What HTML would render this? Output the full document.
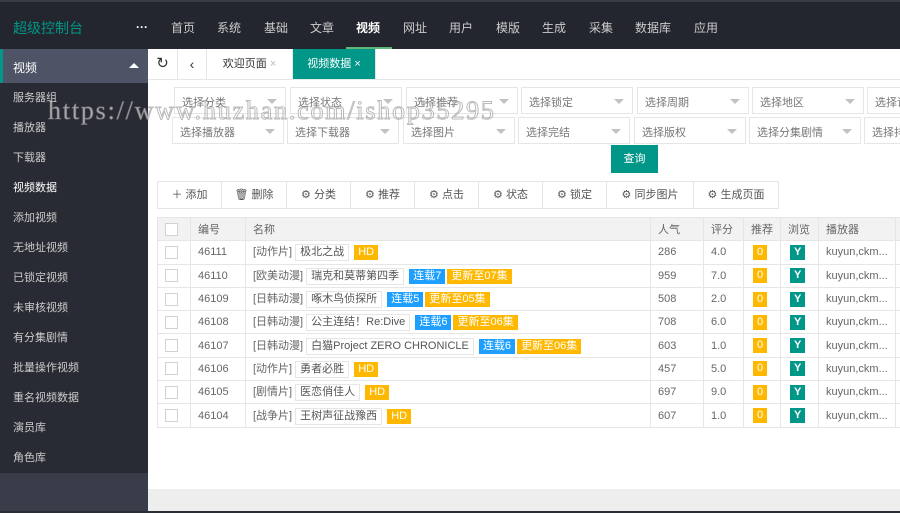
<!DOCTYPE html>
<html><head><meta charset="utf-8"><style>
*{margin:0;padding:0;box-sizing:border-box}
body{width:900px;height:513px;overflow:hidden;font-family:"Liberation Sans","Noto Sans CJK SC",sans-serif;font-size:11px;color:#333;background:#fff;position:relative}
.hdr{position:absolute;left:0;top:0;width:900px;height:49px;background:#23262e;border-top:2px solid #3a3d45}
.logo{position:absolute;left:13px;top:16px;color:#009688;font-size:14px}
.dots{position:absolute;left:136px;top:18px;color:#fff;font-size:12px;font-weight:bold}
.nav span{position:absolute;top:17px;color:#ccc;font-size:12px}
.nav .on{color:#fff;font-weight:bold}
.navline{position:absolute;left:346px;top:45px;width:46px;height:3px;background:#5fb878}
.side{position:absolute;left:0;top:49px;width:148px;height:464px;background:#282b33}
.side .act{height:34px;background:#4e5465;border-left:3px solid #009688;color:#fff;padding:10px 0 0 10px;font-size:12px;position:relative}
.side .act:after{content:"";position:absolute;right:9px;top:14px;border:5px solid transparent;border-bottom-color:#fff;border-top:0}
.side div.i{height:30px;line-height:30px;padding-left:13px;color:#ccc;font-size:11px}
.side .bot{position:absolute;left:0;top:424px;width:148px;height:38px;background:#393d49}
.tabs{position:absolute;left:148px;top:49px;width:752px;height:31px;border-bottom:1px solid #e6e6e6;background:#fff}
.tabs div{position:absolute;top:0;height:30px;line-height:30px;border-right:1px solid #e6e6e6;font-size:11px;text-align:center}
.sel{position:absolute;height:27px;border:1px solid #e6e6e6;background:#fff;color:#777;padding:6px 0 0 7px;font-size:11px}
.sel:after{content:"";position:absolute;right:8px;top:11px;border:5px solid transparent;border-top-color:#c2c2c2}
.btnq{position:absolute;left:611px;top:145px;width:47px;height:28px;background:#009688;color:#fff;text-align:center;line-height:28px;font-size:11px}
.tb{position:absolute;top:181px;height:28px;border:1px solid #e6e6e6;border-right:0;background:#fff;line-height:26px;text-align:center;color:#555}
.wm{position:absolute;left:48px;top:96px;font-family:"Liberation Serif",serif;font-size:26px;color:rgba(255,255,255,.6);-webkit-text-stroke:1px rgba(120,120,120,.5);letter-spacing:1.8px;white-space:nowrap}
table{position:absolute;left:157px;top:217px;border-collapse:collapse;font-size:11px;color:#666;table-layout:fixed;width:760px}
td,th{border:1px solid #e6e6e6;height:23.3px;padding:0 7px;text-align:left;font-weight:normal;white-space:nowrap;overflow:hidden}
th{background:#f2f2f2;color:#666}
.cb{display:inline-block;width:13px;height:13px;border:1px solid #d2d2d2;background:#fff;vertical-align:middle}
.nm{border:1px solid #e6e6e6;padding:0 4px;color:#555;display:inline-block;line-height:15px}
.b{display:inline-block;color:#fff;padding:0 4px;line-height:15px;margin-left:2px}
.y{background:#ffb800}.bl{background:#1e9fff}.g{background:#009688;font-weight:bold}
.foot{position:absolute;left:148px;top:489px;width:752px;height:22px;background:#eee}
.btm{position:absolute;left:0;top:511px;width:900px;height:2px;background:#2a2d34}
</style></head><body>
<div class="hdr"><div class="logo">超级控制台</div><div class="dots">···</div>
<div class="nav"><span style="left:171px">首页</span><span style="left:217px">系统</span><span style="left:264px">基础</span><span style="left:310px">文章</span><span class="on" style="left:356px">视频</span><span style="left:403px">网址</span><span style="left:449px">用户</span><span style="left:496px">模版</span><span style="left:542px">生成</span><span style="left:589px">采集</span><span style="left:635px">数据库</span><span style="left:694px">应用</span></div>
<div class="navline"></div></div>
<div class="side"><div class="act">视频</div>
<div class="i">服务器组</div><div class="i">播放器</div><div class="i">下载器</div><div class="i" style="color:#fff">视频数据</div><div class="i">添加视频</div><div class="i">无地址视频</div><div class="i">已锁定视频</div><div class="i">未审核视频</div><div class="i">有分集剧情</div><div class="i">批量操作视频</div><div class="i">重名视频数据</div><div class="i">演员库</div><div class="i">角色库</div>
<div class="bot"></div></div>
<div class="tabs"><div style="left:0;width:30px;font-size:15px">↻</div><div style="left:30px;width:29px;font-size:14px">‹</div><div style="left:59px;width:86px">欢迎页面 <span style="color:#bbb">×</span></div><div style="left:145px;width:83px;background:#009688;color:#fff">视频数据 <span>×</span></div></div>
<div class="sel" style="left:174px;top:87px;width:112px">选择分类</div>
<div class="sel" style="left:290px;top:87px;width:112px">选择状态</div>
<div class="sel" style="left:406px;top:87px;width:112px">选择推荐</div>
<div class="sel" style="left:521px;top:87px;width:112px">选择锁定</div>
<div class="sel" style="left:637px;top:87px;width:112px">选择周期</div>
<div class="sel" style="left:752px;top:87px;width:112px">选择地区</div>
<div class="sel" style="left:867px;top:87px;width:112px">选择语言</div>
<div class="sel" style="left:172px;top:117px;width:112px">选择播放器</div>
<div class="sel" style="left:287px;top:117px;width:112px">选择下载器</div>
<div class="sel" style="left:403px;top:117px;width:112px">选择图片</div>
<div class="sel" style="left:518px;top:117px;width:112px">选择完结</div>
<div class="sel" style="left:634px;top:117px;width:112px">选择版权</div>
<div class="sel" style="left:749px;top:117px;width:112px">选择分集剧情</div>
<div class="sel" style="left:864px;top:117px;width:112px">选择排序</div>
<div class="wm">https://www.huzhan.com/ishop35295</div>
<div class="btnq">查询</div>
<div class="tb" style="left:157px;width:64px">＋ 添加</div>
<div class="tb" style="left:221px;width:65px">🗑 删除</div>
<div class="tb" style="left:286px;width:64px">⚙ 分类</div>
<div class="tb" style="left:350px;width:64px">⚙ 推荐</div>
<div class="tb" style="left:414px;width:64px">⚙ 点击</div>
<div class="tb" style="left:478px;width:64px">⚙ 状态</div>
<div class="tb" style="left:542px;width:64px">⚙ 锁定</div>
<div class="tb" style="left:606px;width:87px">⚙ 同步图片</div>
<div class="tb" style="left:693px;width:86px;border-right:1px solid #e6e6e6">⚙ 生成页面</div>
<table>
<colgroup><col style="width:33px"><col style="width:55px"><col style="width:405px"><col style="width:53px"><col style="width:40px"><col style="width:37px"><col style="width:38px"><col style="width:77px"><col style="width:22px"></colgroup>
<tr><th><span class="cb"></span></th><th>编号</th><th>名称</th><th>人气</th><th>评分</th><th>推荐</th><th>浏览</th><th>播放器</th><th></th></tr>
<tr><td><span class="cb"></span></td><td>46111</td><td>[动作片] <span class="nm">极北之战</span> <span class="b y">HD</span></td><td>286</td><td>4.0</td><td><span class="b y">0</span></td><td><span class="b g">Y</span></td><td>kuyun,ckm...</td><td></td></tr>
<tr><td><span class="cb"></span></td><td>46110</td><td>[欧美动漫] <span class="nm">瑞克和莫蒂第四季</span> <span class="b bl">连载7</span><span class="b y">更新至07集</span></td><td>959</td><td>7.0</td><td><span class="b y">0</span></td><td><span class="b g">Y</span></td><td>kuyun,ckm...</td><td></td></tr>
<tr><td><span class="cb"></span></td><td>46109</td><td>[日韩动漫] <span class="nm">啄木鸟侦探所</span> <span class="b bl">连载5</span><span class="b y">更新至05集</span></td><td>508</td><td>2.0</td><td><span class="b y">0</span></td><td><span class="b g">Y</span></td><td>kuyun,ckm...</td><td></td></tr>
<tr><td><span class="cb"></span></td><td>46108</td><td>[日韩动漫] <span class="nm">公主连结！Re:Dive</span> <span class="b bl">连载6</span><span class="b y">更新至06集</span></td><td>708</td><td>6.0</td><td><span class="b y">0</span></td><td><span class="b g">Y</span></td><td>kuyun,ckm...</td><td></td></tr>
<tr><td><span class="cb"></span></td><td>46107</td><td>[日韩动漫] <span class="nm">白猫Project ZERO CHRONICLE</span> <span class="b bl">连载6</span><span class="b y">更新至06集</span></td><td>603</td><td>1.0</td><td><span class="b y">0</span></td><td><span class="b g">Y</span></td><td>kuyun,ckm...</td><td></td></tr>
<tr><td><span class="cb"></span></td><td>46106</td><td>[动作片] <span class="nm">勇者必胜</span> <span class="b y">HD</span></td><td>457</td><td>5.0</td><td><span class="b y">0</span></td><td><span class="b g">Y</span></td><td>kuyun,ckm...</td><td></td></tr>
<tr><td><span class="cb"></span></td><td>46105</td><td>[剧情片] <span class="nm">医恋俏佳人</span> <span class="b y">HD</span></td><td>697</td><td>9.0</td><td><span class="b y">0</span></td><td><span class="b g">Y</span></td><td>kuyun,ckm...</td><td></td></tr>
<tr><td><span class="cb"></span></td><td>46104</td><td>[战争片] <span class="nm">王树声征战豫西</span> <span class="b y">HD</span></td><td>607</td><td>1.0</td><td><span class="b y">0</span></td><td><span class="b g">Y</span></td><td>kuyun,ckm...</td><td></td></tr>
</table>
<div class="foot"></div>
<div class="btm"></div>
</body></html>
